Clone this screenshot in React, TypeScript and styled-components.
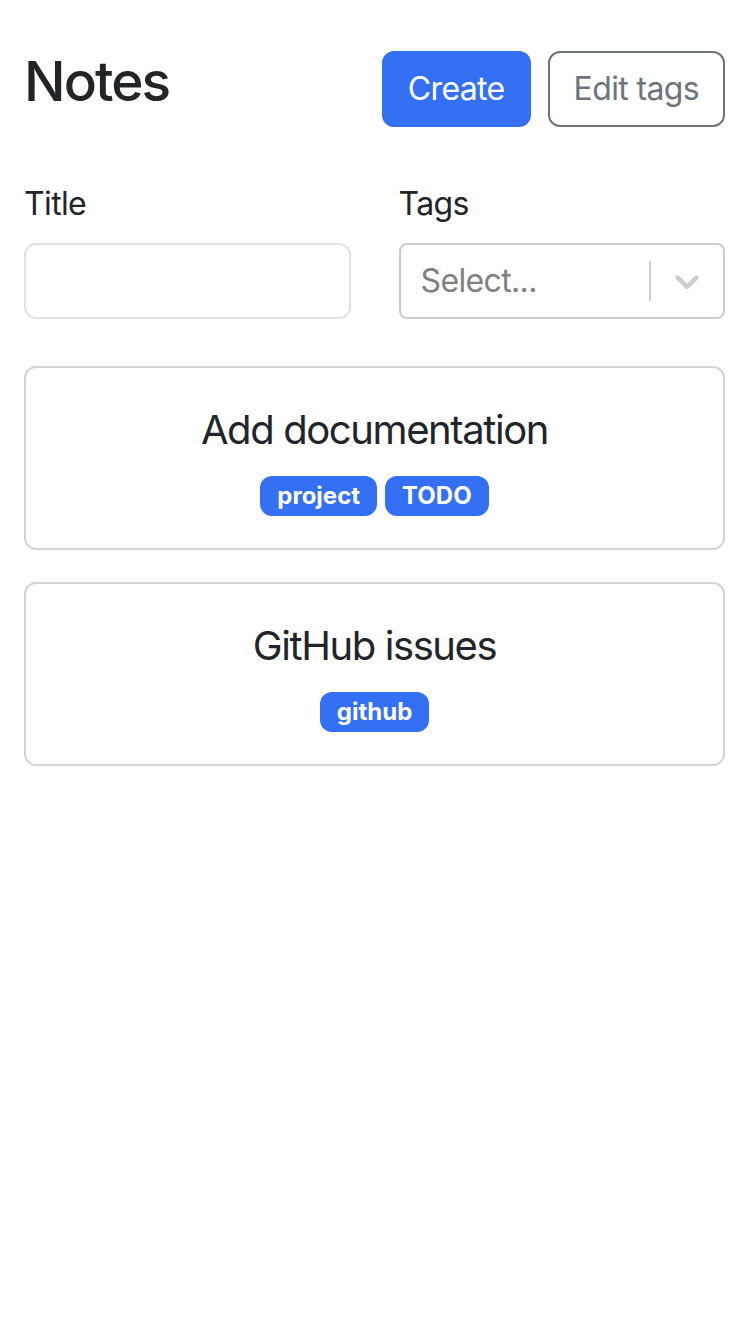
import { createGlobalStyle, styled } from "styled-components";

interface INote {
    id: string;
    title: string;
    tags: string[];
}

const notes: INote[] = [
    { id: "1", title: "Add documentation", tags: ["project", "TODO"] },
    { id: "2", title: "GitHub issues", tags: ["github"] },
];

const GlobalStyle = createGlobalStyle`
    * {
        box-sizing: border-box;
    }
    body {
        margin: 0;
        background: #fff;
        color: #212529;
        font-family: Inter, "Noto Sans", "Liberation Sans", sans-serif;
        font-size: 32px;
        line-height: 1.5;
        letter-spacing: -0.02em;
    }
`;

const Container = styled.div`
    width: 100%;
    padding: 48px 23px 48px 24px;
`;

const Header = styled.div`
    display: flex;
    flex-direction: row;
    align-items: center;
    justify-content: space-between;
    margin-bottom: 46px;
`;

const Heading = styled.h1`
    margin: 0 0 16px 0;
    font-size: 55px;
    font-weight: 500;
    line-height: 1.2;
    letter-spacing: -0.035em;
`;

const ButtonStack = styled.div`
    display: flex;
    gap: 17px;
`;

const Button = styled.button<{ $variant: "primary" | "outline" }>`
    font-family: inherit;
    font-size: 32px;
    letter-spacing: -0.02em;
    line-height: 48px;
    padding: 12px 24px;
    border-radius: 12px;
    border: 2px solid ${({ $variant }) => ($variant === "primary" ? "#3370f4" : "#6c757d")};
    background: ${({ $variant }) => ($variant === "primary" ? "#3370f4" : "#fff")};
    color: ${({ $variant }) => ($variant === "primary" ? "#fff" : "#6c757d")};
`;

const FormRow = styled.div`
    display: grid;
    grid-template-columns: minmax(0, 1fr) minmax(0, 1fr);
    column-gap: 48px;
    margin-bottom: 47px;
`;

const Field = styled.div`
    display: flex;
    flex-direction: column;
    min-width: 0;
`;

const Label = styled.label`
    line-height: 56px;
    margin-bottom: 11px;
`;

const TextInput = styled.input`
    width: 100%;
    min-width: 0;
    height: 76px;
    border: 2px solid #dee2e6;
    border-radius: 12px;
    padding: 12px 24px;
    font-family: inherit;
    font-size: 32px;
    outline: none;
`;

const SelectBox = styled.div`
    height: 76px;
    display: flex;
    align-items: stretch;
    border: 2px solid #cccccc;
    border-radius: 8px;
    background: #fff;
`;

const Placeholder = styled.div`
    flex: 1;
    min-width: 0;
    display: flex;
    align-items: center;
    padding: 4px 16px;
    color: #808080;
    white-space: nowrap;

    span {
        margin: 0 4px;
    }
`;

const Separator = styled.span`
    width: 2px;
    margin: 16px 0;
    background: #cccccc;
`;

const Indicator = styled.div`
    display: flex;
    align-items: center;
    padding: 16px;
    color: #cccccc;
`;

const CardGrid = styled.div`
    display: flex;
    flex-direction: column;
    gap: 32px;
`;

const Card = styled.div`
    border: 2px solid #d3d4d5;
    border-radius: 12px;
    padding: 32px;
    display: flex;
    flex-direction: column;
    align-items: center;
    gap: 16px;
`;

const CardTitle = styled.span`
    font-size: 40px;
    line-height: 60px;
    letter-spacing: -0.035em;
`;

const TagList = styled.div`
    display: flex;
    gap: 8px;
`;

const Badge = styled.span`
    background: #3370f4;
    color: #fff;
    font-size: 24px;
    font-weight: 700;
    line-height: 24px;
    letter-spacing: 0;
    padding: 8px 17px;
    border-radius: 12px;
`;

function Chevron() {
    return (
        <svg width="40" height="40" viewBox="0 0 20 20" fill="currentColor">
            <path d="M4.516 7.548c0.436-0.446 1.043-0.481 1.576 0l3.908 3.747 3.908-3.747c0.533-0.481 1.141-0.446 1.574 0 0.436 0.445 0.408 1.197 0 1.615-0.406 0.418-4.695 4.502-4.695 4.502-0.217 0.223-0.502 0.335-0.787 0.335s-0.57-0.112-0.789-0.335c0 0-4.287-4.084-4.695-4.502s-0.436-1.17 0-1.615z" />
        </svg>
    );
}

function App() {
    return (
        <Container>
            <GlobalStyle />
            <Header>
                <Heading>Notes</Heading>
                <ButtonStack>
                    <Button $variant="primary">Create</Button>
                    <Button $variant="outline">Edit tags</Button>
                </ButtonStack>
            </Header>
            <FormRow>
                <Field>
                    <Label>Title</Label>
                    <TextInput type="text" />
                </Field>
                <Field>
                    <Label>Tags</Label>
                    <SelectBox>
                        <Placeholder><span>Select...</span></Placeholder>
                        <Separator />
                        <Indicator><Chevron /></Indicator>
                    </SelectBox>
                </Field>
            </FormRow>
            <CardGrid>
                {notes.map((note) => (
                    <Card key={note.id}>
                        <CardTitle>{note.title}</CardTitle>
                        <TagList>
                            {note.tags.map((tag) => (
                                <Badge key={tag}>{tag}</Badge>
                            ))}
                        </TagList>
                    </Card>
                ))}
            </CardGrid>
        </Container>
    );
}

export default App;
